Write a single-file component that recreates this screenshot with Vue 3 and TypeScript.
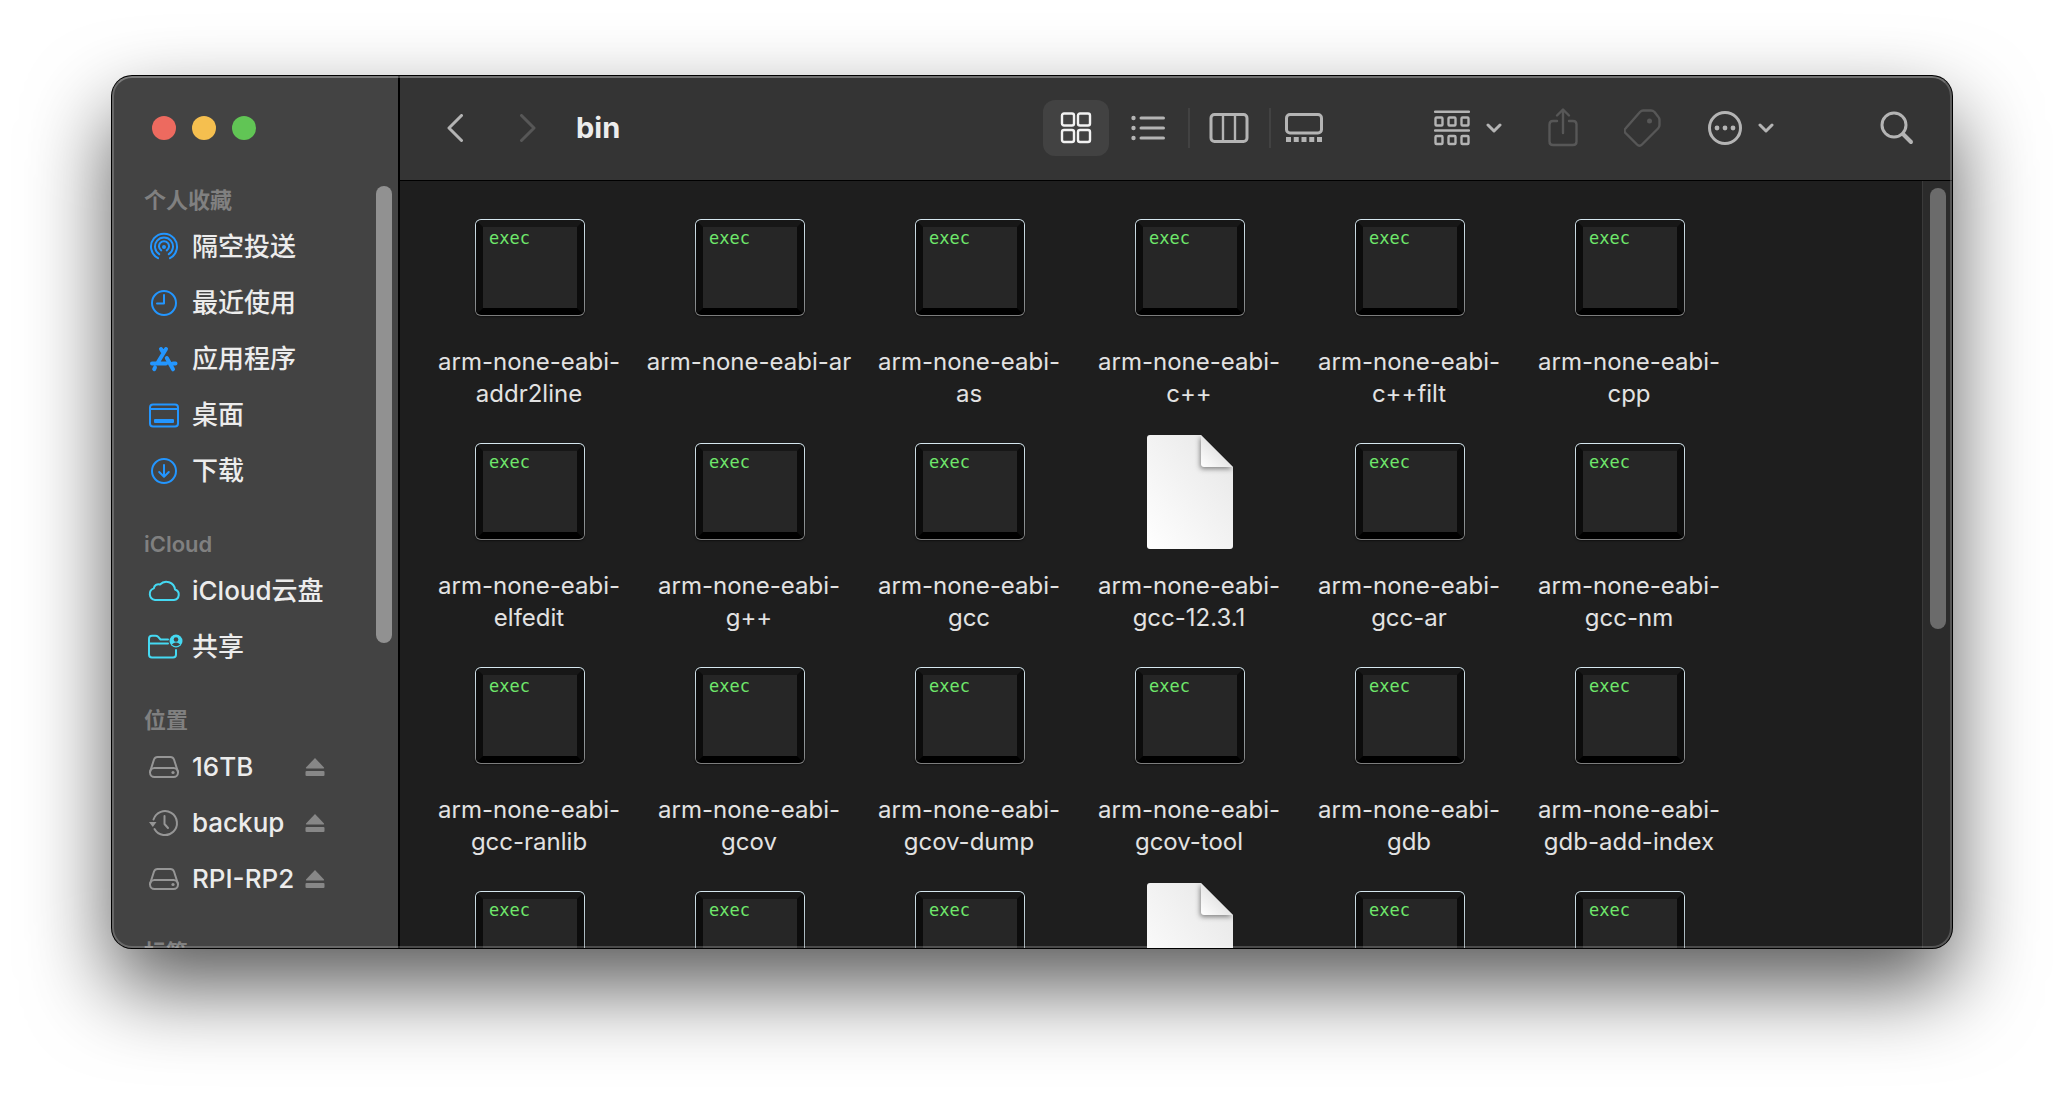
<script setup lang="ts">
interface Place {
  name: string
  icon: string
  ejectable?: boolean
}

interface Section {
  title: string
  tone: 'blue' | 'cyan' | 'gray'
  places: Place[]
}

interface FileItem {
  kind: 'exec' | 'doc'
  name: string
}

const sections: Section[] = [
  {
    title: '个人收藏',
    tone: 'blue',
    places: [
      { name: '隔空投送', icon: 'airdrop' },
      { name: '最近使用', icon: 'recents' },
      { name: '应用程序', icon: 'apps' },
      { name: '桌面', icon: 'desktop' },
      { name: '下载', icon: 'downloads' },
    ],
  },
  {
    title: 'iCloud',
    tone: 'cyan',
    places: [
      { name: 'iCloud云盘', icon: 'cloud' },
      { name: '共享', icon: 'shared' },
    ],
  },
  {
    title: '位置',
    tone: 'gray',
    places: [
      { name: '16TB', icon: 'disk', ejectable: true },
      { name: 'backup', icon: 'backup', ejectable: true },
      { name: 'RPI-RP2', icon: 'disk', ejectable: true },
    ],
  },
  { title: '标签', tone: 'gray', places: [] },
]

const exec = (name = ''): FileItem => ({ kind: 'exec', name })
const doc = (name = ''): FileItem => ({ kind: 'doc', name })

const files: FileItem[] = [
  exec('arm-none-eabi-\naddr2line'),
  exec('arm-none-eabi-ar'),
  exec('arm-none-eabi-\nas'),
  exec('arm-none-eabi-\nc++'),
  exec('arm-none-eabi-\nc++filt'),
  exec('arm-none-eabi-\ncpp'),
  exec('arm-none-eabi-\nelfedit'),
  exec('arm-none-eabi-\ng++'),
  exec('arm-none-eabi-\ngcc'),
  doc('arm-none-eabi-\ngcc-12.3.1'),
  exec('arm-none-eabi-\ngcc-ar'),
  exec('arm-none-eabi-\ngcc-nm'),
  exec('arm-none-eabi-\ngcc-ranlib'),
  exec('arm-none-eabi-\ngcov'),
  exec('arm-none-eabi-\ngcov-dump'),
  exec('arm-none-eabi-\ngcov-tool'),
  exec('arm-none-eabi-\ngdb'),
  exec('arm-none-eabi-\ngdb-add-index'),
  exec(),
  exec(),
  exec(),
  doc(),
  exec(),
  exec(),
]
</script>

<template>
  <div class="desktop">
    <div class="window">
      <aside class="sidebar">
        <div class="lights">
          <button class="light red" type="button"></button>
          <button class="light yellow" type="button"></button>
          <button class="light green" type="button"></button>
        </div>
        <div class="side-body">
          <nav class="side-list">
            <section v-for="section in sections" :key="section.title" class="section">
              <h2>{{ section.title }}</h2>
              <div v-for="place in section.places" :key="place.name" class="place">
                <a href="#" class="place-link">
                  <svg class="place-icon" :class="section.tone" viewBox="-16 -16 32 32">
                    <g v-if="place.icon === 'airdrop'">
                      <path d="M-6 11.2A13 13 0 1 1 6 11.2M-4.8 7.2A9 9 0 1 1 4.8 7.2M-2.8 3.4A5 5 0 1 1 2.8 3.4" />
                      <circle class="solid" r="2" />
                    </g>
                    <g v-else-if="place.icon === 'recents'">
                      <circle r="12" />
                      <path d="M0 -8V0.600H-7" />
                    </g>
                    <g v-else-if="place.icon === 'apps'" class="heavy">
                      <path d="M-12 4.500H2M9 4.500H11.500M2 -10L-6.500 4M-9 8.500L-9.800 10.200M-3 -10L-1.500 -7.500M2.800 -1L9 10.300" />
                    </g>
                    <g v-else-if="place.icon === 'desktop'">
                      <rect x="-14" y="-10.500" width="28" height="22" rx="3" />
                      <path d="M-14 -6H14" />
                      <rect class="solid" x="-10" y="4" width="20" height="4" rx="1" />
                    </g>
                    <g v-else-if="place.icon === 'downloads'">
                      <circle r="12" />
                      <path d="M0 -6V5.500M-4.800 1L0 5.800L4.800 1" />
                    </g>
                    <g v-else-if="place.icon === 'cloud'">
                      <path d="M-9 9A6 6 0 0 1 -10.200 -2.600A4.700 4.700 0 0 1 -4 -6.500A8.700 8.700 0 0 1 11 -1.500A5.400 5.400 0 0 1 10 9Z" />
                    </g>
                    <g v-else-if="place.icon === 'shared'">
                      <path d="M4 -7.500H-3.500L-6 -10.300Q-7 -11.300 -8.500 -11.300H-12Q-15 -11.300 -15 -8.300V7.500Q-15 10.500 -12 10.500H9Q12 10.500 12 7.500V3M-15 -3.500H4" />
                      <circle class="solid" cx="12" cy="-6" r="6.500" />
                      <circle class="hole" cx="12" cy="-7.500" r="2.300" />
                      <path class="hole" d="M7.800 -2.500Q12 -6.500 16.200 -2.500Q12 1 7.800 -2.500" />
                    </g>
                    <g v-else-if="place.icon === 'disk'">
                      <path d="M-14 5L-10 -7.500Q-9 -10 -6.500 -10H6.500Q9 -10 10 -7.500L14 5" />
                      <rect x="-14" y="1" width="28" height="9" rx="4.500" />
                      <circle class="solid" cx="9" cy="5.500" r="1.600" />
                    </g>
                    <g v-else>
                      <path d="M-10.500 -3.500A12 12 0 1 1 -9.500 6M0.500 -7V1L4 5" />
                      <path class="solid" d="M-15 -1H-7.500L-11.200 4Z" />
                    </g>
                  </svg>
                  <span>{{ place.name }}</span>
                </a>
                <button v-if="place.ejectable" class="eject" type="button">
                  <svg viewBox="0 0 20 20">
                    <path d="M10 1L19 10.500Q19.500 11.500 18.500 11.500H1.500Q0.500 11.500 1 10.500Z" />
                    <rect x="0.500" y="14" width="19" height="5" rx="1" />
                  </svg>
                </button>
              </div>
            </section>
          </nav>
          <div class="side-scroll"><div class="side-thumb"></div></div>
        </div>
      </aside>

      <main class="main">
        <header class="toolbar">
          <div class="nav-group">
            <button type="button" class="tool">
              <svg width="16" height="28" viewBox="0 0 16 28"><path class="w3" d="M14.500 1.500L2 14L14.500 26.500" /></svg>
            </button>
            <button type="button" class="tool dim">
              <svg width="16" height="28" viewBox="0 0 16 28"><path class="w3" d="M1.500 1.500L14 14L1.500 26.500" /></svg>
            </button>
            <h1>bin</h1>
          </div>

          <div class="views">
            <button type="button" class="view active">
              <svg width="32" height="32" viewBox="0 0 32 32">
                <rect x="2" y="1.500" width="12" height="12" rx="2" /><rect x="18" y="1.500" width="12" height="12" rx="2" />
                <rect x="2" y="18" width="12" height="12" rx="2" /><rect x="18" y="18" width="12" height="12" rx="2" />
              </svg>
            </button>
            <button type="button" class="view wide">
              <svg width="34" height="26" viewBox="0 0 34 26">
                <path class="w3" d="M10 3H32.500M10 13H32.500M10 23H32.500" />
                <g class="fill"><circle cx="2.500" cy="3" r="2.200" /><circle cx="2.500" cy="13" r="2.200" /><circle cx="2.500" cy="23" r="2.200" /></g>
              </svg>
            </button>
            <span class="rule"></span>
            <button type="button" class="view wide">
              <svg width="40" height="30" viewBox="0 0 40 30">
                <rect class="w3" x="2" y="1.500" width="36" height="27" rx="3.500" />
                <path d="M14 1V29M26 1V29" />
              </svg>
            </button>
            <span class="rule"></span>
            <button type="button" class="view">
              <svg width="38" height="30" viewBox="0 0 38 30">
                <rect class="w3" x="1.500" y="1.500" width="35" height="18.500" rx="3.500" />
                <path class="dots" d="M1 26.500H37" />
              </svg>
            </button>
          </div>

          <div class="actions">
            <button type="button" class="tool">
              <svg width="36" height="36" viewBox="0 0 36 36">
                <path d="M1 1.800H35M1 20.500H35" />
                <g>
                  <rect x="1.500" y="7.500" width="7" height="8" rx="1" /><rect x="14.500" y="7.500" width="7" height="8" rx="1" /><rect x="27.500" y="7.500" width="7" height="8" rx="1" />
                  <rect x="1.500" y="26" width="7" height="8" rx="1" /><rect x="14.500" y="26" width="7" height="8" rx="1" /><rect x="27.500" y="26" width="7" height="8" rx="1" />
                </g>
              </svg>
              <svg width="16" height="10" viewBox="0 0 16 10"><path class="w3" d="M2 2L8 8L14 2" /></svg>
            </button>
            <button type="button" class="tool dim">
              <svg width="30" height="42" viewBox="0 0 30 42">
                <path d="M9 14H5Q1.500 14 1.500 17.500V34.500Q1.500 38 5 38H25Q28.500 38 28.500 34.500V17.500Q28.500 14 25 14H21M15 26V3M9 8.500L15 2.500L21 8.500" />
              </svg>
            </button>
            <button type="button" class="tool dim">
              <svg width="38" height="38" viewBox="1 0 38 38">
                <path d="M20 1.500H28Q30 1.500 31.500 3L35 7.500Q36.500 9 36.500 11V16Q36.500 18 35 19.500L19 35.500Q16.500 38 14 35.500L2.500 24Q0.500 21.500 2.500 19.500L17 3Q18.500 1.500 20 1.500Z" />
                <circle class="fill" cx="26.500" cy="12" r="2.500" />
              </svg>
            </button>
            <button type="button" class="tool">
              <svg width="34" height="34" viewBox="0 0 34 34">
                <circle class="w3" cx="17" cy="17" r="15.500" />
                <g class="fill"><circle cx="9" cy="17" r="2.400" /><circle cx="17" cy="17" r="2.400" /><circle cx="25" cy="17" r="2.400" /></g>
              </svg>
              <svg width="16" height="10" viewBox="0 0 16 10"><path class="w3" d="M2 2L8 8L14 2" /></svg>
            </button>
            <button type="button" class="tool search">
              <svg width="34" height="34" viewBox="0 0 34 34">
                <circle class="w3" cx="14" cy="14" r="12" />
                <path class="w4" d="M23 23L31 31" />
              </svg>
            </button>
          </div>
        </header>

        <div class="content">
          <ul class="grid">
            <li v-for="(file, i) in files" :key="i" class="file">
              <div class="thumb">
                <div v-if="file.kind === 'exec'" class="exec"><div class="screen">exec</div></div>
                <svg v-else class="doc" width="86" height="114" viewBox="0 0 86 114">
                  <defs>
                    <linearGradient id="paper" x1="1" y1="0" x2="0" y2="1">
                      <stop offset="0" stop-color="#e6e6e6" />
                      <stop offset="1" stop-color="#ffffff" />
                    </linearGradient>
                    <linearGradient id="fold" x1="1" y1="0" x2="0" y2="1">
                      <stop offset="0.400" stop-color="#e2e2e2" />
                      <stop offset="1" stop-color="#ffffff" />
                    </linearGradient>
                    <filter id="fold-shadow" x="-50%" y="-50%" width="200%" height="200%">
                      <feGaussianBlur stdDeviation="2.500" />
                    </filter>
                    <clipPath id="sheet"><path d="M3 0H54L86 32V111Q86 114 83 114H3Q0 114 0 111V3Q0 0 3 0Z" /></clipPath>
                  </defs>
                  <g clip-path="url(#sheet)">
                    <rect width="86" height="114" fill="url(#paper)" />
                    <path d="M53 2V31Q53 34 56 34H86L54 2Z" fill="#000" fill-opacity="0.450" filter="url(#fold-shadow)" />
                    <path d="M54 0V29Q54 32 57 32H86Z" fill="url(#fold)" />
                  </g>
                </svg>
              </div>
              <p v-if="file.name" class="label">{{ file.name }}</p>
            </li>
          </ul>
          <div class="track"><div class="track-thumb"></div></div>
        </div>
      </main>
    </div>
  </div>
</template>

<style>
body {
  background: #fff;
}
</style>

<style scoped>
* {
  box-sizing: border-box;
}

button {
  padding: 0;
  border: 0;
  background: none;
  color: inherit;
}

.desktop {
  display: flex;
  height: 100vh;
  padding: 76px 112px 148px;
  font-family: Inter, "Noto Sans CJK SC", sans-serif;
}

.window {
  position: relative;
  display: flex;
  flex: 1;
  min-width: 0;
  overflow: hidden;
  border-radius: 20px;
  background: #1e1e1e;
  box-shadow: 0 0 0 1px #000, 0 38px 84px rgba(0, 0, 0, 0.66);
}

/* Light rim laid over the whole window edge */
.window::after {
  content: "";
  position: absolute;
  inset: 0;
  border: 2px solid rgba(255, 255, 255, 0.2);
  border-top-color: rgba(255, 255, 255, 0.3);
  border-radius: 20px;
  pointer-events: none;
}

.sidebar {
  display: flex;
  flex-direction: column;
  flex: none;
  width: 288px;
  border-right: 2px solid #000;
  background: #434343;
}

.lights {
  display: flex;
  align-items: center;
  flex: none;
  gap: 16px;
  height: 105px;
  padding: 0 40px 1px;
}

.light {
  width: 24px;
  height: 24px;
  border-radius: 50%;
}

.red { background: #ed6a5f; }
.yellow { background: #f5bf4f; }
.green { background: #61c555; }

.side-body {
  display: flex;
  flex: 1;
  min-height: 0;
}

.side-list {
  flex: 1;
  overflow-y: auto;
  scrollbar-width: none;
  padding-left: 32px;
}

.section {
  margin-bottom: 26px;
}

h2 {
  margin: 0;
  height: 38px;
  font-size: 22px;
  font-weight: 600;
  line-height: 38px;
  color: #808080;
}

.place {
  display: flex;
  align-items: center;
  height: 56px;
  padding: 0 51px 0 4px;
}

.place-link {
  display: flex;
  align-items: center;
  flex: 1;
  gap: 12px;
  color: #ececec;
  font-size: 26px;
  font-weight: 500;
  line-height: 32px;
  text-decoration: none;
  white-space: nowrap;
}

.place-icon {
  flex: none;
  width: 32px;
  height: 32px;
  overflow: visible;
  fill: none;
  stroke: currentColor;
  stroke-width: 2;
  stroke-linecap: round;
  stroke-linejoin: round;
}

.blue { color: #2396ff; }
.cyan { color: #45d9f2; }
.gray { color: #969696; }

.heavy { stroke-width: 4; }

.solid {
  fill: currentColor;
  stroke: none;
}

.hole {
  fill: #434343;
  stroke: none;
}

.eject svg {
  display: block;
  width: 20px;
  height: 20px;
  fill: #878787;
}

.side-scroll {
  flex: none;
  width: 22px;
  padding: 5px 6px 0 0;
}

.side-thumb {
  height: 60%;
  border-radius: 8px;
  background: #919191;
}

.main {
  display: flex;
  flex: 1;
  flex-direction: column;
  min-width: 0;
}

.toolbar {
  display: flex;
  align-items: center;
  justify-content: space-between;
  flex: none;
  height: 105px;
  padding: 0 38px 1px 47px;
  border-bottom: 1px solid #000;
  background: #343434;
  color: #b4b4b4;
}

.toolbar svg {
  display: block;
  fill: none;
  stroke: currentColor;
  stroke-width: 2.4;
  stroke-linecap: round;
  stroke-linejoin: round;
}

.toolbar .w3 { stroke-width: 3; }
.toolbar .w4 { stroke-width: 4; }

.toolbar .fill,
.toolbar .fill * {
  fill: currentColor;
  stroke: none;
}

.toolbar .dots {
  stroke-width: 5;
  stroke-linecap: butt;
  stroke-dasharray: 5 2.75;
}

.nav-group {
  display: flex;
  align-items: center;
  gap: 57px;
}

h1 {
  margin: 0 0 0 -17px;
  color: #ececec;
  font-size: 29px;
  font-weight: 700;
  line-height: 36px;
}

.tool {
  display: flex;
  align-items: center;
  gap: 16px;
}

.dim { color: #575757; }

.views {
  display: flex;
  align-items: center;
  margin-left: 325px;
}

.view {
  display: flex;
  align-items: center;
  justify-content: center;
  width: 66px;
  height: 56px;
  border-radius: 12px;
}

.wide { width: 79px; }

.active {
  background: #424242;
  color: #f2f2f2;
}

.rule {
  width: 2px;
  height: 40px;
  background: #424242;
}

.actions {
  display: flex;
  align-items: center;
  gap: 46px;
}

.search {
  margin-left: 60px;
}

.content {
  display: flex;
  flex: 1;
  min-height: 0;
}

.grid {
  display: grid;
  grid-template-columns: repeat(auto-fill, 220px);
  grid-auto-rows: 224px;
  flex: 1;
  margin: 0;
  padding: 23px 0 0 20px;
  overflow-y: auto;
  scrollbar-width: none;
  list-style: none;
}

.thumb {
  display: flex;
  align-items: center;
  justify-content: center;
  height: 128px;
}

.exec {
  width: 110px;
  height: 97px;
  margin-bottom: 2px;
  padding: 1px;
  border-radius: 6px;
  background: linear-gradient(#d6e8f0, #a9b8bf 45%, #7c7c7c);
  box-shadow: 0 1px 2px rgba(0, 0, 0, 0.5);
}

.screen {
  height: 100%;
  padding-left: 6px;
  border: 7px solid #0c0c0c;
  border-top-color: #171717;
  border-bottom-color: #000;
  border-radius: 5px;
  background: #262626;
  color: #6fe76b;
  font-family: "DejaVu Sans Mono", monospace;
  font-size: 17px;
  line-height: 22px;
}

.label {
  margin: 14px 2px 0 0;
  color: #e2e2e2;
  font-size: 24px;
  font-weight: 400;
  line-height: 32px;
  text-align: center;
  white-space: pre;
}

.track {
  flex: none;
  width: 30px;
  padding: 7px 6px 0 7px;
  border-left: 1px solid #3a3a3a;
  background: #2b2b2b;
}

.track-thumb {
  height: 58%;
  border-radius: 8px;
  background: #6b6b6b;
}
</style>
